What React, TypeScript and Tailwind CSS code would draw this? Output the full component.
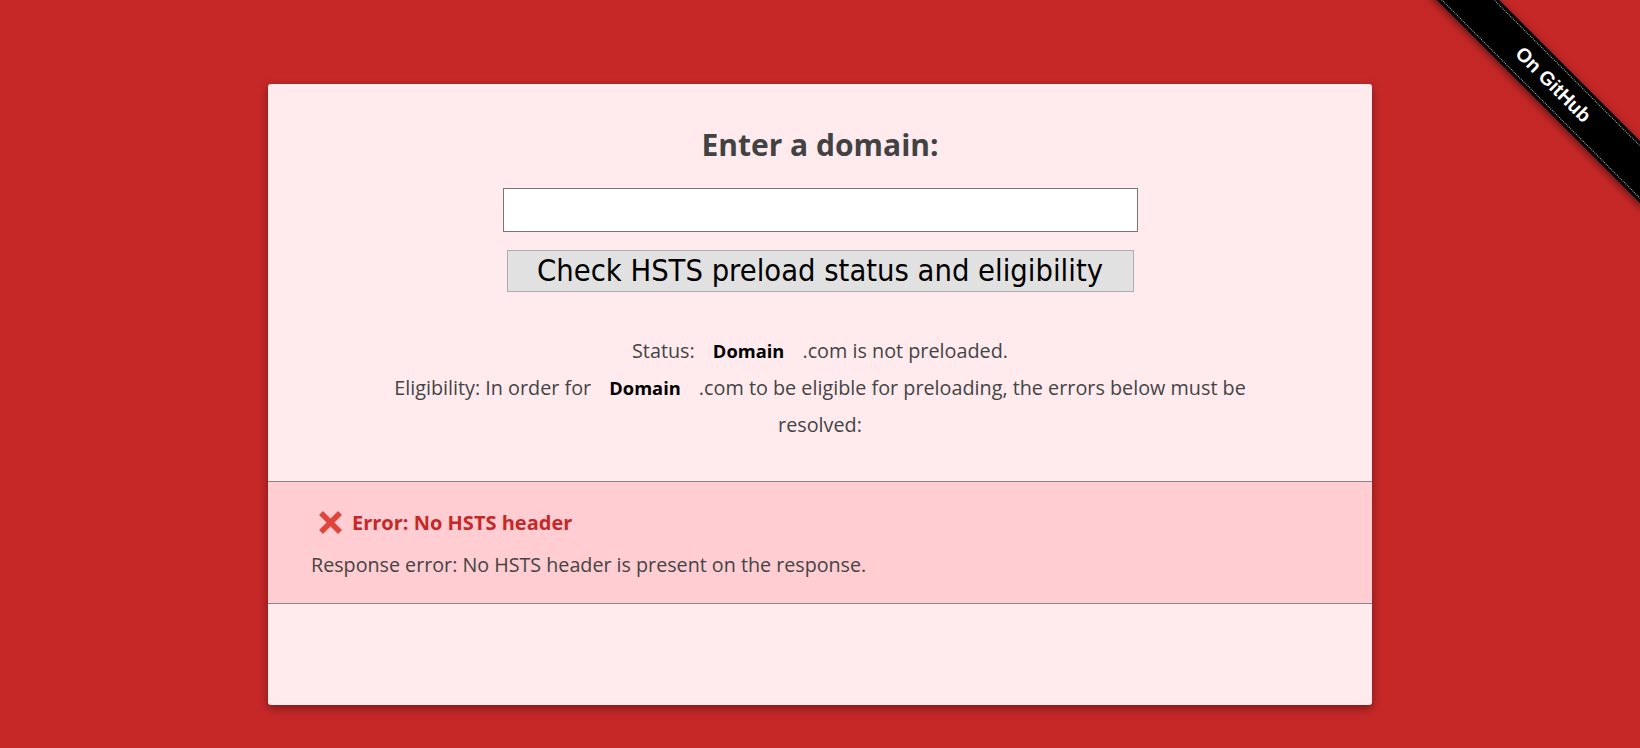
const Ribbon = () => {
  return (
    <div className="absolute top-0 right-0 w-[240px] h-[240px] overflow-hidden pointer-events-none">
      <div className="absolute left-[3px] top-[63px] w-[300px] h-[44px] rotate-45 bg-black shadow-[0_2px_8px_rgba(0,0,0,0.55)] flex items-center">
        <div className="w-full h-[38px] border-y border-dotted border-white/70 flex items-center justify-center">
          <span className="text-white font-bold text-[19.5px] font-['Liberation_Sans',Arial,sans-serif] [text-shadow:0_-1px_rgba(0,0,0,0.5)]">
            On GitHub
          </span>
        </div>
      </div>
    </div>
  );
};

const DomainTag = () => {
  return (
    <span className="inline-block px-[13px] text-[18.3px] font-bold text-black">
      Domain
    </span>
  );
};

export default function App() {
  return (
    <div className="relative min-h-screen bg-[#c62828] overflow-hidden pt-[84px] font-['Open_Sans',sans-serif]">
      <Ribbon />
      <div className="mx-auto w-[1104px] h-[621px] bg-[#ffebee] rounded-[3px] shadow-[0_3px_10px_rgba(0,0,0,0.4)] flex flex-col">
        <div className="flex flex-col items-center pt-[43px]">
          <h1 className="text-[30px] leading-[36px] font-bold text-[#424242]">
            Enter a domain:
          </h1>
          <input
            type="text"
            className="mt-[25px] w-[635px] h-[44px] border border-[#767676] bg-white outline-none"
          />
          <button className="mt-[18px] w-[627px] h-[42px] bg-[#e1e1e1] border border-[#adadad] text-[30.6px] leading-none text-black font-['DejaVu_Sans_Condensed','DejaVu_Sans',sans-serif]">
            Check HSTS preload status and eligibility
          </button>
          <p className="mt-[40px] text-center text-[19.8px] leading-[37px] text-[#444]">
            Status: <DomainTag /> .com is not preloaded.
            <br />
            Eligibility: In order for <DomainTag /> .com to be eligible for
            preloading, the errors below must be
            <br />
            resolved:
          </p>
        </div>
        <div className="mt-[38px] border-y border-[#888] bg-[#ffcdd2] pl-[43px] pt-[22px] pb-[20px]">
          <div className="flex items-center gap-[9px] pl-[7px] leading-[37px]">
            <svg width="25" height="25" viewBox="0 0 25 25">
              <path
                d="M3 3 L22 22 M22 3 L3 22"
                stroke="#e0443c"
                strokeWidth="5.5"
                strokeLinecap="butt"
              />
            </svg>
            <span className="text-[20px] font-bold text-[#c62828]">
              Error: No HSTS header
            </span>
          </div>
          <p className="mt-[5px] text-[19.7px] leading-[37px] text-[#444]">
            Response error: No HSTS header is present on the response.
          </p>
        </div>
      </div>
    </div>
  );
}
